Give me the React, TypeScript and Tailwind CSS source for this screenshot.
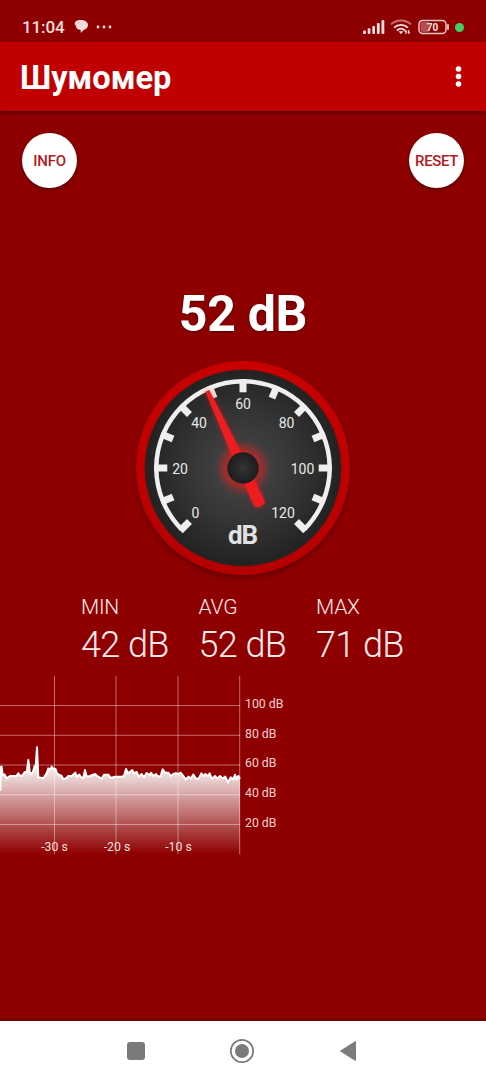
const TICKS = [0, 1, 2, 3, 4, 5, 6, 7, 8, 9, 10, 11, 12]

const DIAL_LABELS = [
  { text: '0', x: 59.5, y: 157 },
  { text: '20', x: 44, y: 112.5 },
  { text: '40', x: 63, y: 67 },
  { text: '60', x: 107, y: 47.5 },
  { text: '80', x: 150.5, y: 67 },
  { text: '100', x: 166.5, y: 112.5 },
  { text: '120', x: 147, y: 157 },
]

const STATS = [
  { label: 'MIN', value: '42 dB' },
  { label: 'AVG', value: '52 dB' },
  { label: 'MAX', value: '71 dB' },
]

const LEVELS = ['100 dB', '80 dB', '60 dB', '40 dB', '20 dB']

// history samples as x,y pairs in thirds of a pixel
const HISTORY =
  '-3,272 0,272 1,342 3,274 5,272 8,298 13,295 20,307 30,300 50,299 55,292 60,300 68,298 74,288 80,290 85,252 90,294 98,290 104,270 107,272 111,214 115,304 130,307 140,292 145,277 150,282 155,272 160,278 166,278 172,294 185,300 190,310 200,306 205,300 215,300 226,290 230,302 238,296 243,304 250,306 255,282 260,302 270,300 285,294 292,300 305,308 312,296 325,296 332,306 345,302 365,302 372,300 378,279 384,292 392,286 397,282 402,292 410,288 416,302 425,294 432,304 440,291 450,297 453,290 460,300 468,294 474,302 482,300 488,280 495,290 505,290 512,300 520,294 528,292 535,294 542,290 550,300 557,310 566,302 572,308 580,296 588,308 596,308 604,292 610,300 616,294 624,300 629,292 635,308 645,300 652,308 660,300 668,308 676,302 684,320 692,304 700,310 705,296 710,310 715,300 720,308'

function StatusBar() {
  return (
    <div className="flex h-[42px] items-center bg-[#8e0000] pt-3 pl-[22px] text-[#f5dcdc]">
      <span className="w-[43px] text-[17px] leading-none font-medium tracking-[-0.1px]">11:04</span>
      <svg className="ml-2 h-4 w-[17px]" viewBox="0 0 17 16" fill="#f5dcdc">
        <path d="M3 2.200C5 .8 8.500 .9 11 1.500c2.300.5 4 2.400 4 4.600 0 2.600-2 4.300-4.300 4.800L7.700 14v-3C4.700 10.700 3 9.200 3 7 1.300 5.700 1.300 3.400 3 2.200z" />
        <path d="M3.200 6.900c.1-2 1.700-3.300 4.200-3.400" fill="none" stroke="#a84040" strokeOpacity=".5" strokeWidth=".4" />
      </svg>
      <svg className="ml-[6px] h-4 w-4" viewBox="0 0 16 16" fill="#f5dcdc">
        <circle cx="2" cy="8" r="1.400" />
        <circle cx="8" cy="8" r="1.400" />
        <circle cx="14" cy="8" r="1.400" />
      </svg>
      <svg className="ml-auto h-4 w-[22px]" viewBox="0 0 22 16" fill="#f5dcdc">
        <rect x="0" y="11.500" width="3" height="3.500" rx="1" />
        <rect x="4.700" y="9.200" width="2.700" height="5.800" rx="1" />
        <rect x="9.300" y="7" width="2.700" height="8" rx="1" />
        <rect x="13.900" y="4" width="2.800" height="11" rx="1" />
        <rect x="18.500" y="1" width="2.800" height="14" rx="1" />
      </svg>
      <svg className="ml-[5px] h-4 w-[22px]" viewBox="0 0 22 16" fill="none" strokeWidth="1.800">
        <path d="M1 5.400C6.800.2 15.200.2 21 5.400" stroke="#c47070" />
        <path d="M4 8.700c4-3.700 10-3.700 14 0" stroke="#f5dcdc" />
        <path d="M6.800 11.500c2.500-2.200 5.800-2.200 8.300 0" stroke="#f5dcdc" />
        <path d="M8.500 12.300h5L11 15.300z" fill="#f5dcdc" />
        <path d="M16 15v-3.500M18.700 11v3.500" stroke="#f5dcdc" strokeWidth="1.200" />
        <path d="M14.400 13l1.600-2 1.500 2zM17.300 13h3l-1.500 2z" fill="#f5dcdc" />
      </svg>
      <svg className="ml-[6px] h-4 w-8" viewBox="0 0 32 16">
        <rect x="2.500" y="3" width="9" height="10" rx="2.500" fill="#b64d51" />
        <rect x="1" y="1.500" width="27" height="13" rx="3.800" fill="none" stroke="#efc4c4" strokeWidth="1.500" />
        <path d="M30 6v4" stroke="#efc4c4" strokeWidth="1.800" strokeLinecap="round" />
        <text x="14.500" y="11.700" textAnchor="middle" className="text-[10px] font-bold" fill="#f8e4e4">
          70
        </text>
      </svg>
      <span className="mr-[22px] ml-[5px] h-[9px] w-[9px] rounded-full bg-[#45cc66]" />
    </div>
  )
}

function Gauge() {
  return (
    <svg className="h-[230px] w-[230px] shrink-0" viewBox="-8 -8 230 230">
      <defs>
        <radialGradient id="face">
          <stop offset="0" stopColor="#484848" />
          <stop offset=".55" stopColor="#353535" />
          <stop offset="1" stopColor="#222222" />
        </radialGradient>
        <radialGradient id="glow">
          <stop offset=".5" stopColor="#ed1b1b" stopOpacity=".7" />
          <stop offset="1" stopColor="#ed1b1b" stopOpacity="0" />
        </radialGradient>
        <radialGradient id="hub">
          <stop offset="0" stopColor="#343434" />
          <stop offset="1" stopColor="#1c1c1c" />
        </radialGradient>
        <linearGradient id="rim" x1="0" y1="0" x2="0" y2="1">
          <stop offset="0" stopColor="#c90000" />
          <stop offset="1" stopColor="#b50000" />
        </linearGradient>
        <filter id="soft" x="-50%" y="-50%" width="200%" height="200%">
          <feGaussianBlur stdDeviation="3" />
        </filter>
      </defs>
      <circle cx="107" cy="110" r="106.500" fill="#400" opacity=".65" filter="url(#soft)" />
      <circle cx="107" cy="107" r="107" fill="url(#rim)" />
      <circle cx="107" cy="107" r="98.500" fill="url(#face)" stroke="#9b0a0a" strokeWidth="1" />
      <path d="M45.700 168.300A86.700 86.700 0 1 1 168.300 168.300" fill="none" stroke="#efefef" strokeWidth="4.500" />
      {TICKS.map((i) => (
        <rect
          key={i}
          x="103.500"
          y="18.300"
          width="7"
          height="13"
          fill="#efefef"
          transform={`rotate(${i * 22.5 - 135} 107 107)`}
        />
      ))}
      {DIAL_LABELS.map((l) => (
        <text key={l.text} x={l.x} y={l.y} textAnchor="middle" fill="#e9e9e9" className="text-[14px]">
          {l.text}
        </text>
      ))}
      <text x="107" y="183" textAnchor="middle" fill="#e2e2e2" className="text-[26px] font-bold" textLength="30">
        dB
      </text>
      <g transform="rotate(-24.800 107 107)">
        <path d="M105.500 22h3l4 122q0 5-5.500 5t-5.500-5z" fill="#ee1818" opacity=".7" filter="url(#soft)" />
        <path d="M104.800 22h4.400l3 85 .5 38q0 4-4 4h-3.400q-4 0-4-4l.5-38z" fill="#f01d20" />
      </g>
      <circle cx="107" cy="107" r="28" fill="url(#glow)" />
      <circle cx="107" cy="107" r="15.700" fill="url(#hub)" />
    </svg>
  )
}

function HistoryChart() {
  return (
    <div className="flex h-[178px]">
      <svg className="h-[178px] w-[241px]" viewBox="0 0 241 178">
        <defs>
          <linearGradient id="area" gradientUnits="userSpaceOnUse" x1="0" y1="280" x2="0" y2="534">
            <stop offset="0" stopColor="#fff" stopOpacity=".92" />
            <stop offset="1" stopColor="#fff" stopOpacity="0" />
          </linearGradient>
        </defs>
        <g transform="scale(.333333)">
          <polygon points={`-3,534 ${HISTORY} 720,534`} fill="url(#area)" />
          <polyline points={HISTORY} fill="none" stroke="#fff" strokeWidth="6" strokeLinejoin="round" />
        </g>
        <path
          d="M0 29.500h240M0 59.300h240M0 89h240M0 118.700h240M0 148.500h240M54.500 0v178M116 0v178M178 0v178M239.700 0v178"
          fill="none"
          stroke="#fff"
          strokeOpacity=".42"
        />
        <g fill="#f6dede" textAnchor="middle" className="text-[12.3px]">
          <text x="54.500" y="175">-30 s</text>
          <text x="117" y="175">-20 s</text>
          <text x="178.500" y="175">-10 s</text>
        </g>
      </svg>
      <div className="flex flex-col pt-[13px] pl-1 text-[12.3px] text-[#f3d0d0]">
        {LEVELS.map((level) => (
          <span key={level} className="h-[29.7px] leading-[30px]">
            {level}
          </span>
        ))}
      </div>
    </div>
  )
}

export default function App() {
  return (
    <div className="flex h-[1080px] w-[486px] flex-col overflow-hidden bg-[#8e0000] font-[Roboto,sans-serif] text-white">
      <StatusBar />
      <header className="z-10 flex h-[69px] items-center justify-between bg-[#c00000] pr-[24px] pl-5 shadow-[0_2px_4px_rgba(0,0,0,0.4)]">
        <h1 className="pt-[4px] text-[32.6px] leading-none font-bold">Шумомер</h1>
        <svg className="h-6 w-[7px]" viewBox="0 0 7 24" fill="#fff">
          <circle cx="3.500" cy="4" r="2.800" />
          <circle cx="3.500" cy="11.500" r="2.800" />
          <circle cx="3.500" cy="19" r="2.800" />
        </svg>
      </header>

      <main className="flex flex-1 flex-col">
        <div className="flex justify-between px-[22px] pt-[22px]">
          <button className="h-[55px] w-[55px] rounded-full bg-white pt-[2px] text-[15px] font-medium tracking-[-0.25px] text-[#b51820] shadow-[0_2px_4px_rgba(0,0,0,0.35)]">
            INFO
          </button>
          <button className="h-[55px] w-[55px] rounded-full bg-white pt-[2px] text-[15px] font-medium tracking-[-0.4px] text-[#b51820] shadow-[0_2px_4px_rgba(0,0,0,0.35)]">
            RESET
          </button>
        </div>

        <div className="mt-[94px] flex flex-col items-center">
          <div className="h-[71px] text-[50px] leading-[64px] font-bold tracking-[-0.3px] [text-shadow:0_1px_3px_rgba(0,0,0,0.4)]">
            52 dB
          </div>
          <Gauge />
        </div>

        <div className="mt-[10px] flex h-[83px] pl-[81px] font-light text-[#ffebeb]">
          {STATS.map((stat) => (
            <div key={stat.label} className="w-[117.5px]">
              <div className="text-[21px] leading-[28px] tracking-[-0.2px]">{stat.label}</div>
              <div className="text-[36px] leading-[48px] tracking-[-0.6px]">{stat.value}</div>
            </div>
          ))}
        </div>

        <HistoryChart />
      </main>

      <div className="h-1 bg-gradient-to-b from-[#8e0000] to-[#650000]" />
      <nav className="flex h-[59px] items-center justify-between bg-white pr-[129px] pl-[127px]">
        <div className="h-[18px] w-[18px] rounded-[3px] bg-[#7b7b7b]" />
        <svg className="h-[26px] w-[26px]" viewBox="0 0 26 26">
          <circle cx="13" cy="13" r="11.200" fill="none" stroke="#7b7b7b" strokeWidth="1.700" />
          <circle cx="13" cy="13" r="7" fill="#7b7b7b" />
        </svg>
        <svg className="h-[22px] w-[18px]" viewBox="0 0 18 22">
          <path d="M1.500 11L16.500 1.500v19z" fill="#7b7b7b" stroke="#7b7b7b" strokeLinejoin="round" />
        </svg>
      </nav>
    </div>
  )
}
